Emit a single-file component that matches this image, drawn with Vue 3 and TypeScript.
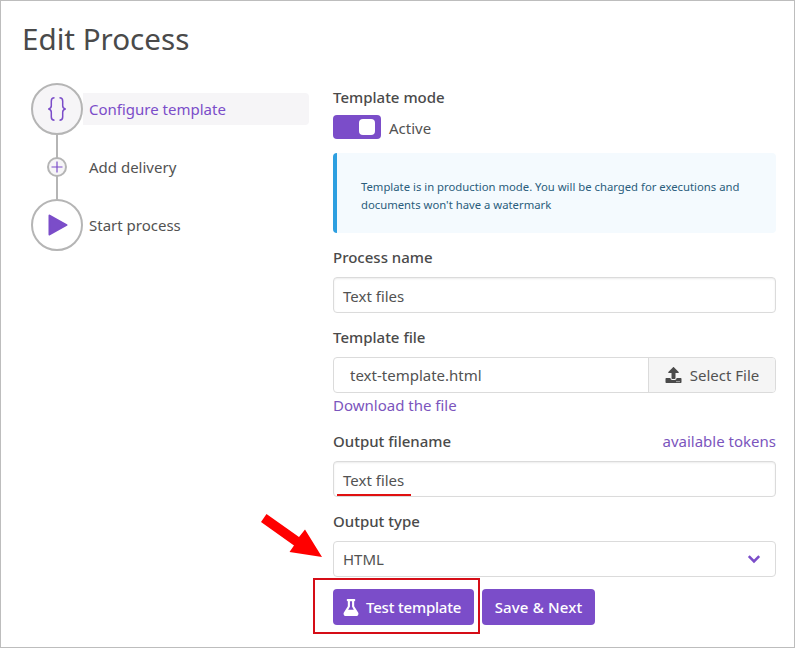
<script setup lang="ts">
interface Step { label: string; kind: 'code' | 'plus' | 'play'; active?: boolean }
const steps: Step[] = [
  { label: 'Configure template', kind: 'code', active: true },
  { label: 'Add delivery', kind: 'plus' },
  { label: 'Start process', kind: 'play' },
]
</script>

<template>
  <div class="page">
    <h1 class="title">Edit Process</h1>
    <div class="columns">
      <aside class="steps">
        <div v-for="(s, i) in steps" :key="s.label" class="step" :class="{ first: i === 0, last: i === steps.length - 1 }">
          <div class="marker">
            <div class="circle" :class="[s.kind, { filled: s.active }]">
              <svg v-if="s.kind === 'code'" width="18" height="24" viewBox="0 0 18 24"><path d="M6.500 0.800C3.800 0.800 3.300 2 3.300 4V8.800C3.300 10.600 2.500 11.500 0.800 12C2.500 12.500 3.300 13.400 3.300 15.200V20C3.300 22 3.800 23.200 6.500 23.200M11.500 0.800C14.200 0.800 14.700 2 14.700 4V8.800C14.700 10.600 15.500 11.500 17.200 12C15.500 12.500 14.700 13.400 14.700 15.200V20C14.700 22 14.200 23.200 11.500 23.200" stroke="#7b4dc9" stroke-width="1.500" fill="none"/></svg>
              <svg v-else-if="s.kind === 'plus'" width="12" height="12" viewBox="0 0 12 12"><path d="M6 0.500v11M0.500 6h11" stroke="#7b4dc9" stroke-width="1.200" fill="none"/></svg>
              <svg v-else width="20" height="22" viewBox="0 0 20 22"><path d="M1.500 1.500L18.500 11L1.500 20.500Z" fill="#7b4dc9" stroke="#7b4dc9" stroke-width="2" stroke-linejoin="round"/></svg>
            </div>
          </div>
          <div class="step-label" :class="{ active: s.active }">{{ s.label }}</div>
        </div>
      </aside>

      <main class="form">
        <div class="field mode">
          <div class="label">Template mode</div>
          <div class="toggle-row">
            <div class="toggle"><span class="knob"></span></div>
            <span class="toggle-text">Active</span>
          </div>
        </div>

        <div class="alert">Template is in production mode. You will be charged for executions and documents won't have a watermark</div>

        <div class="field name">
          <div class="label">Process name</div>
          <div class="input">Text files</div>
        </div>

        <div class="field file">
          <div class="label">Template file</div>
          <div class="file-group">
            <div class="file-name">text-template.html</div>
            <div class="file-btn">
              <svg width="17" height="16" viewBox="0 0 512 512"><path fill="#4a4a4a" d="M296 384h-80c-13.300 0-24-10.700-24-24V192h-87.700c-17.800 0-26.700-21.500-14.100-34.100L242.300 5.700c7.500-7.500 19.800-7.500 27.300 0l152.200 152.200c12.600 12.600 3.700 34.100-14.100 34.100H320v168c0 13.300-10.700 24-24 24zm216-8v112c0 13.300-10.700 24-24 24H24c-13.300 0-24-10.700-24-24V376c0-13.300 10.700-24 24-24h136v8c0 30.900 25.100 56 56 56h80c30.900 0 56-25.100 56-56v-8h136c13.300 0 24 10.700 24 24zm-124 88c0-11-9-20-20-20s-20 9-20 20 9 20 20 20 20-9 20-20zm64 0c0-11-9-20-20-20s-20 9-20 20 9 20 20 20 20-9 20-20z"/></svg>
              <span>Select File</span>
            </div>
          </div>
          <a class="link download">Download the file</a>
        </div>

        <div class="field output">
          <div class="label-row">
            <div class="label">Output filename</div>
            <a class="link">available tokens</a>
          </div>
          <div class="input underlined">Text files<span class="red-underline"></span></div>
        </div>

        <div class="field type">
          <div class="label">Output type</div>
          <div class="input select">
            <span>HTML</span>
            <svg width="14" height="10" viewBox="0 0 14 10"><path d="M1.800 2.200L7 7.400L12.200 2.200" stroke="#7b4dc9" stroke-width="2.600" fill="none"/></svg>
          </div>
          <svg class="arrow" width="62" height="44" viewBox="0 0 62 44"><path d="M0 8L5.500 0L38 23L44 15.500L61 43L28.500 38L33 31.500Z" fill="#ff0000"/></svg>
        </div>

        <div class="actions">
          <button class="btn test" type="button">
            <svg width="16" height="17" viewBox="0 0 448 512"><path fill="#fff" d="M437.200 403.500L320 215V64h8c13.300 0 24-10.700 24-24V24c0-13.300-10.700-24-24-24H120c-13.300 0-24 10.700-24 24v16c0 13.300 10.700 24 24 24h8v151L10.800 403.500C-18.500 450.600 15.300 512 70.900 512h306.200c55.700 0 89.400-61.500 60.100-108.500zM137.900 320l48.200-77.600c3.700-5.200 5.800-11.600 5.800-18.400V64h64v160c0 6.900 2.200 13.200 5.800 18.400l48.200 77.600h-172z"/></svg>
            <span>Test template</span>
            <span class="red-box"></span>
          </button>
          <button class="btn save" type="button">Save &amp; Next</button>
        </div>
      </main>
    </div>
  </div>
</template>

<style>
html, body { margin: 0; background: #fff; }
</style>

<style scoped>
.page {
  box-sizing: border-box;
  width: 795px;
  height: 648px;
  border: 1px solid #bdbdbd;
  font-family: "Noto Sans", "Open Sans", sans-serif;
  font-size: 15px;
  color: #525252;
  overflow: hidden;
  background: #fff;
}
.title {
  margin: 0;
  padding: 17px 0 0 21px;
  font-size: 29.600px;
  line-height: 41px;
  font-weight: 400;
  color: #4a4a4a;
}
.columns { display: flex; margin-top: 21px; }
.steps { width: 278px; margin-left: 30px; flex: none; }
.step { position: relative; display: flex; align-items: center; height: 58px; }
.step::before {
  content: "";
  position: absolute;
  left: 25px;
  top: 0;
  bottom: 0;
  width: 2px;
  background: #b5b5b5;
}
.step.first::before { top: 29px; }
.step.last::before { bottom: 29px; }
.marker { position: relative; width: 52px; display: flex; justify-content: center; flex: none; z-index: 1; }
.circle {
  box-sizing: border-box;
  border: 2px solid #b5b5b5;
  border-radius: 50%;
  background: #fff;
  width: 52px;
  height: 52px;
  display: flex;
  align-items: center;
  justify-content: center;
}
.circle.filled { background: #f6f5f7; }
.circle.plus { width: 20px; height: 20px; background: #f6f5f7; }
.circle.play svg { margin-left: 1px; }
.step-label {
  flex: 1;
  height: 32px;
  line-height: 32px;
  padding-left: 6px;
  border-radius: 0 4px 4px 0;
  white-space: nowrap;
}
.step-label.active { color: #7b4dc9; background: #f6f5f7; }

.form { width: 443px; margin-left: 24px; flex: none; }
.field { position: relative; }
.label { font-weight: 500; line-height: 20px; color: #4a4a4a; }
.mode { margin-top: 7px; }
.toggle-row { display: flex; align-items: center; margin-top: 8px; }
.toggle { width: 48px; height: 24px; border-radius: 4px; background: #7b4dc9; position: relative; flex: none; }
.knob { position: absolute; right: 6px; top: 4px; width: 16px; height: 16px; border-radius: 4px; background: #fff; }
.toggle-text { margin-left: 8px; padding-top: 2px; }
.alert {
  box-sizing: border-box;
  margin-top: 14px;
  height: 80px;
  padding: 25px 28px 0 24px;
  background: #f4fafe;
  border-left: 4px solid #2d9fe0;
  border-radius: 4px;
  font-size: 11.300px;
  line-height: 18px;
  color: #2a5d7c;
}
.name { margin-top: 14px; }
.input {
  box-sizing: border-box;
  position: relative;
  height: 36px;
  margin-top: 10px;
  line-height: 34px;
  padding: 1px 9px 0;
  border: 1px solid #dbdbdb;
  border-radius: 4px;
  background: #fff;
  box-shadow: inset 0 1px 2px rgba(10, 10, 10, 0.08);
}
.file { margin-top: 14px; }
.file-group { display: flex; height: 36px; margin-top: 10px; box-sizing: border-box; border: 1px solid #dbdbdb; border-radius: 4px; overflow: hidden; }
.file-name { flex: 1; line-height: 34px; padding-left: 16px; }
.file-btn { width: 127px; box-sizing: border-box; border-left: 1px solid #dbdbdb; background: #f5f5f5; display: flex; align-items: center; justify-content: center; gap: 8px; }
.link { color: #7b55bd; text-decoration: none; }
.download { display: block; line-height: 24px; }
.output { margin-top: 14px; }
.label-row { display: flex; justify-content: space-between; line-height: 20px; }
.red-underline { position: absolute; left: 3px; bottom: 0; width: 74px; height: 2px; background: #e01010; }
.type { margin-top: 14px; }
.select { display: flex; justify-content: space-between; align-items: center; padding: 0 14px 0 9px; margin-top: 10px; box-shadow: none; }
.arrow { position: absolute; left: -72px; top: 3px; }
.actions { display: flex; gap: 8px; margin-top: 12px; }
.btn {
  position: relative;
  height: 36px;
  border: 0;
  border-radius: 4px;
  background: #7b4dc9;
  color: #fff;
  font: inherit;
  font-weight: 500;
  display: flex;
  align-items: center;
  padding: 0;
}
.test { width: 141px; padding-left: 10px; gap: 7px; letter-spacing: -0.2px; }
.save { width: 113px; justify-content: center; letter-spacing: 0.15px; }
.red-box {
  position: absolute;
  left: -20px;
  top: -11px;
  width: 167px;
  height: 56px;
  box-sizing: border-box;
  border: 2px solid #d50d17;
}
</style>
